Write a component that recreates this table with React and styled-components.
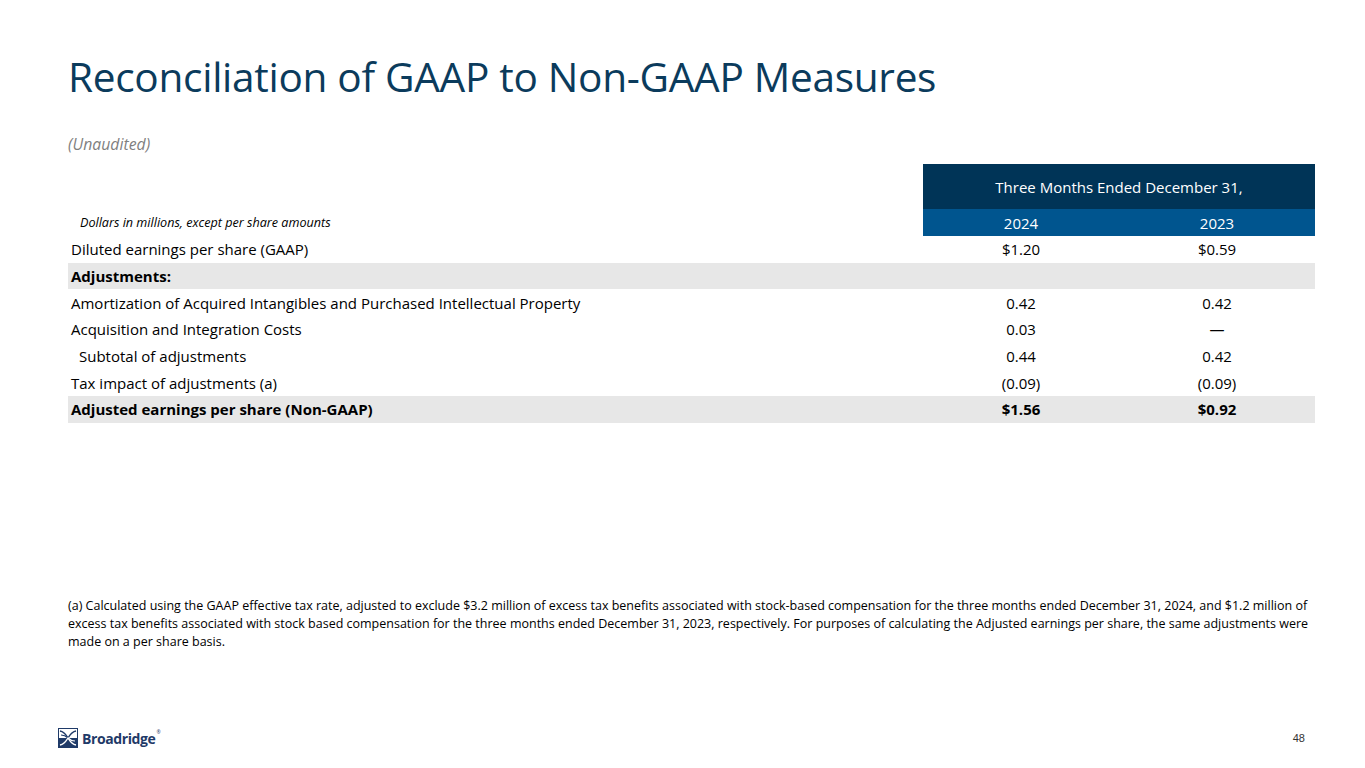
import React from "react";
import styled, { createGlobalStyle } from "styled-components";

const Global = createGlobalStyle`
  html, body { margin: 0; padding: 0; background: #ffffff; }
  body { font-family: "Open Sans", "Noto Sans", sans-serif; color: #000; }
`;

const Slide = styled.div`
  position: relative;
  width: 1365px;
  height: 768px;
  box-sizing: border-box;
  padding: 46px 50px 0 68px;
  display: flex;
  flex-direction: column;
  overflow: hidden;
`;

const Title = styled.h1`
  margin: 0;
  font-family: "Open Sans", sans-serif;
  font-weight: 400;
  font-size: 40.6px;
  line-height: 62px;
  color: #0b3b5c;
  letter-spacing: -0.3px;
  white-space: nowrap;
`;

const Subtitle = styled.div`
  margin-top: 26px;
  font-style: italic;
  font-size: 15.8px;
  line-height: 20px;
  color: #7f7f7f;
`;

const Table = styled.div`
  margin-top: 10px;
  display: grid;
  grid-template-columns: 1fr 196px 196px;
  grid-template-rows: 45px 27px repeat(7, 26.7px);
  font-size: 15px;
`;

const HeadSpan = styled.div`
  grid-column: 2 / span 2;
  background: #003457;
  color: #fff;
  display: flex;
  align-items: center;
  justify-content: center;
  font-size: 15px;
`;

const HeadGap = styled.div``;

const UnitsLabel = styled.div`
  display: flex;
  align-items: center;
  padding-left: 12px;
  font-style: italic;
  font-size: 12.6px;
  color: #000;
  white-space: nowrap;
`;

const YearCell = styled.div`
  background: #00558f;
  color: #fff;
  display: flex;
  align-items: center;
  justify-content: center;
  font-size: 15px;
`;

const Label = styled.div`
  display: flex;
  align-items: center;
  padding-left: ${(p) => (p.$indent ? 11 : 3)}px;
  background: ${(p) => (p.$shade ? "#e7e7e7" : "transparent")};
  font-weight: ${(p) => (p.$bold ? 700 : 400)};
  white-space: nowrap;
`;

const Value = styled.div`
  display: flex;
  align-items: center;
  justify-content: center;
  background: ${(p) => (p.$shade ? "#e7e7e7" : "transparent")};
  font-weight: ${(p) => (p.$bold ? 700 : 400)};
`;

const Footnote = styled.p`
  margin: 0;
  margin-top: auto;
  margin-bottom: 117px;
  font-size: 12.5px;
  line-height: 18px;
  color: #000;
  white-space: nowrap;
`;

const Footer = styled.div`
  position: absolute;
  left: 58px;
  right: 60px;
  bottom: 20px;
  display: flex;
  align-items: center;
  justify-content: space-between;
`;

const Logo = styled.div`
  display: flex;
  align-items: center;
  gap: 4px;
`;

const LogoWord = styled.span`
  font-family: "Open Sans", sans-serif;
  font-weight: 700;
  font-size: 14px;
  letter-spacing: -0.4px;
  color: #1f3a68;
  position: relative;
`;

const Reg = styled.sup`
  font-size: 5px;
  font-weight: 400;
  vertical-align: top;
  margin-left: 1px;
`;

const PageNum = styled.span`
  font-family: "Liberation Sans", Arial, sans-serif;
  font-size: 11px;
  color: #333;
`;

const rows = [
  { label: "Diluted earnings per share (GAAP)", a: "$1.20", b: "$0.59" },
  { label: "Adjustments:", a: "", b: "", bold: true, shade: true },
  {
    label:
      "Amortization of Acquired Intangibles and Purchased Intellectual Property",
    a: "0.42",
    b: "0.42",
  },
  { label: "Acquisition and Integration Costs", a: "0.03", b: "—" },
  { label: "Subtotal of adjustments", a: "0.44", b: "0.42", indent: true },
  { label: "Tax impact of adjustments (a)", a: "(0.09)", b: "(0.09)" },
  {
    label: "Adjusted earnings per share (Non-GAAP)",
    a: "$1.56",
    b: "$0.92",
    bold: true,
    shade: true,
  },
];

function BroadridgeMark() {
  return (
    <svg width="20" height="20" viewBox="0 0 20 20" aria-hidden="true">
      <rect x="0.5" y="0.5" width="19" height="19" fill="#fff" stroke="#1f3a68" />
      <rect x="0" y="10" width="20" height="10" fill="#1f3a68" />
      <path
        d="M2 3 C7 4 8 7 10 10 C12 7 13 4 18 3"
        fill="none"
        stroke="#1f3a68"
        strokeWidth="1.3"
      />
      <path
        d="M3 7 C6 7 8 8 10 10"
        fill="none"
        stroke="#1f3a68"
        strokeWidth="1.1"
      />
      <path
        d="M2 17 C7 16 8 13 10 10 C12 13 13 16 18 17"
        fill="none"
        stroke="#fff"
        strokeWidth="1.3"
      />
      <path
        d="M17 13 C14 13 12 12 10 10"
        fill="none"
        stroke="#fff"
        strokeWidth="1.1"
      />
    </svg>
  );
}

export default function App() {
  return (
    <>
      <Global />
      <Slide>
        <Title>Reconciliation of GAAP to Non-GAAP Measures</Title>
        <Subtitle>(Unaudited)</Subtitle>
        <Table>
          <HeadGap />
          <HeadSpan>Three Months Ended December 31,</HeadSpan>
          <UnitsLabel>Dollars in millions, except per share amounts</UnitsLabel>
          <YearCell>2024</YearCell>
          <YearCell>2023</YearCell>
          {rows.map((r) => (
            <React.Fragment key={r.label}>
              <Label $bold={r.bold} $shade={r.shade} $indent={r.indent}>
                {r.label}
              </Label>
              <Value $bold={r.bold} $shade={r.shade}>
                {r.a}
              </Value>
              <Value $bold={r.bold} $shade={r.shade}>
                {r.b}
              </Value>
            </React.Fragment>
          ))}
        </Table>
        <Footnote>
          (a) Calculated using the GAAP effective tax rate, adjusted to exclude
          $3.2 million of excess tax benefits associated with stock-based
          compensation for the three months ended December 31, 2024, and $1.2
          million of
          <br />
          excess tax benefits associated with stock based compensation for the
          three months ended December 31, 2023, respectively. For purposes of
          calculating the Adjusted earnings per share, the same adjustments were
          <br />
          made on a per share basis.
        </Footnote>
        <Footer>
          <Logo>
            <BroadridgeMark />
            <LogoWord>
              Broadridge<Reg>®</Reg>
            </LogoWord>
          </Logo>
          <PageNum>48</PageNum>
        </Footer>
      </Slide>
    </>
  );
}
